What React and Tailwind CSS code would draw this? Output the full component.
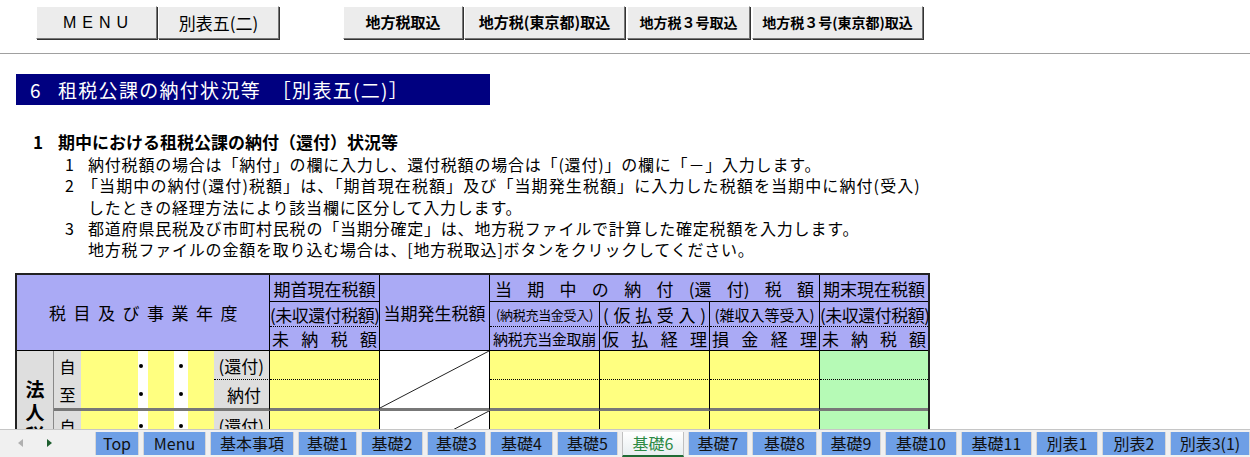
import React from 'react';

const JP = "font-['Noto_Sans_CJK_JP',sans-serif]";

const topButtons = [
  { label: '地方税取込', cls: 'w-[120px] ml-[64px] text-[15px] font-bold' },
  { label: '地方税(東京都)取込', cls: 'w-[161px] ml-[1px] text-[15px] font-bold' },
  { label: '地方税３号取込', cls: 'w-[123px] ml-[2px] text-[14px] font-bold' },
  { label: '地方税３号(東京都)取込', cls: 'w-[171px] ml-[2px] text-[14px] font-bold' },
];

const tabs = [
  ['Top', 'w-[44px]'],
  ['Menu', 'w-[63px]'],
  ['基本事項', 'w-[84px]'],
  ['基礎1', 'w-[59px]'],
  ['基礎2', 'w-[62px]'],
  ['基礎3', 'w-[59px]'],
  ['基礎4', 'w-[63px]'],
  ['基礎5', 'w-[61px]'],
  ['基礎6', 'w-[62px]'],
  ['基礎7', 'w-[60px]'],
  ['基礎8', 'w-[65px]'],
  ['基礎9', 'w-[60px]'],
  ['基礎10', 'w-[72px]'],
  ['基礎11', 'w-[71px]'],
  ['別表1', 'w-[62px]'],
  ['別表2', 'w-[64px]'],
  ['別表3(1)', 'w-[80px]'],
];

// characters spread evenly across the cell, like Excel's distributed alignment
function Spread({ chars, className = '' }) {
  return (
    <div className={`flex justify-between ${className}`}>
      {chars.map((c, i) => (
        <span key={i}>{c}</span>
      ))}
    </div>
  );
}

function Diagonal() {
  return (
    <svg className="absolute inset-0 w-full h-full" viewBox="0 0 100 100" preserveAspectRatio="none">
      <line x1="0" y1="100" x2="100" y2="0" stroke="#222" strokeWidth="1" vectorEffect="non-scaling-stroke" />
    </svg>
  );
}

function Dot() {
  return <span className="block w-[4px] h-[4px] rounded-full bg-black"></span>;
}

const lav = 'bg-[#aaaaf5]';
const gray = 'bg-[#dedede]';
const yel = 'bg-[#ffff80]';
const grn = 'bg-[#b6fab6]';
const dot = '[border-bottom-style:dotted]';
const thick = 'border-b-[3px] border-b-[#777]';

function DataRows({ first }) {
  return (
    <>
      <tr className="h-[29px]">
        {first && (
          <td rowSpan={4} className={`${gray} border-r border-r-[#888] align-middle`}>
            <div className="flex flex-col items-center text-[19px] font-bold leading-[23px]">
              <span>法</span>
              <span>人</span>
              <span>税</span>
            </div>
          </td>
        )}
        <td className={`${gray} text-center text-[16px]`}>自</td>
        <td className={yel}></td>
        <td className="bg-white pl-[1px]"><Dot /></td>
        <td className={yel}></td>
        <td className="bg-white pl-[5px]"><Dot /></td>
        <td className={yel}></td>
        <td className={`${gray} text-right pr-[5px] text-[17px] border-r border-black border-b border-b-black ${dot}`}>(還付)</td>
        <td className={`${yel} border-r border-black border-b ${dot}`}></td>
        <td rowSpan={2} className={`relative bg-white border-r border-black ${thick}`}>
          <Diagonal />
        </td>
        <td className={`${yel} border-r border-black border-b ${dot}`}></td>
        <td className={`${yel} border-r border-black border-b ${dot}`}></td>
        <td className={`${yel} border-r border-black border-b ${dot}`}></td>
        <td className={`${grn} border-b border-black ${dot}`}></td>
      </tr>
      <tr className="h-[31px]">
        <td className={`${gray} text-center text-[16px] ${thick}`}>至</td>
        <td className={`${yel} ${thick}`}></td>
        <td className={`bg-white pl-[1px] ${thick}`}><Dot /></td>
        <td className={`${yel} ${thick}`}></td>
        <td className={`bg-white pl-[5px] ${thick}`}><Dot /></td>
        <td className={`${yel} ${thick}`}></td>
        <td className={`${gray} text-right pr-[8px] text-[17px] border-r border-black ${thick}`}>納付</td>
        <td className={`${yel} border-r border-black ${thick}`}></td>
        <td className={`${yel} border-r border-black ${thick}`}></td>
        <td className={`${yel} border-r border-black ${thick}`}></td>
        <td className={`${yel} border-r border-black ${thick}`}></td>
        <td className={`${grn} ${thick}`}></td>
      </tr>
    </>
  );
}

export default function App() {
  return (
    <div className={`w-[1250px] h-[457px] flex flex-col bg-white text-black overflow-hidden ${JP}`}>
      <div className="flex-1 overflow-hidden">
        {/* button bar */}
        <div className="h-[54px] pt-[6px] border-b border-[#a0a0a0] flex items-start pl-[36px]">
          <button className="w-[121px] h-[33px] bg-[#ececec] border border-t-white border-l-white border-b-[#777] border-r-[#777] shadow-[1px_1px_0_#333] font-['Liberation_Sans',sans-serif] text-[16px] tracking-[6px] pl-[4px]">
            MENU
          </button>
          <button className="w-[121px] h-[33px] ml-[1px] bg-[#ececec] border border-t-white border-l-white border-b-[#777] border-r-[#777] shadow-[1px_1px_0_#333] text-[17px]">
            別表五(二)
          </button>
          {topButtons.map((b) => (
            <button
              key={b.label}
              className={`h-[33px] bg-[#ececec] border border-t-white border-l-white border-b-[#777] border-r-[#777] shadow-[1px_1px_0_#333] ${b.cls}`}
            >
              {b.label}
            </button>
          ))}
        </div>

        {/* section title */}
        <div className="mt-[20px] ml-[16px] w-[474px] h-[31px] bg-[#000080] text-white text-[19px] leading-[31px] pl-[14px] flex">
          <span className="w-[28px]">6</span>
          <span className="tracking-[1.3px]">租税公課の納付状況等　［別表五(二)］</span>
        </div>

        {/* notes */}
        <div className="mt-[26px] ml-[33px] flex text-[17px] font-bold leading-[22px]">
          <span className="w-[25px]">1</span>
          <span>期中における租税公課の納付（還付）状況等</span>
        </div>
        <div className="mt-[1px] ml-[65px] text-[16px] leading-[21.25px] tracking-[0.8px]">
          <div className="flex">
            <span className="w-[23px]">1</span>
            <span>納付税額の場合は「納付」の欄に入力し、還付税額の場合は「(還付)」の欄に「－」入力します。</span>
          </div>
          <div className="flex">
            <span className="w-[23px]">2</span>
            <span className="-ml-[6px] tracking-[1.1px]">「当期中の納付(還付)税額」は、「期首現在税額」及び「当期発生税額」に入力した税額を当期中に納付(受入)</span>
          </div>
          <div className="pl-[23px]">したときの経理方法により該当欄に区分して入力します。</div>
          <div className="flex">
            <span className="w-[23px]">3</span>
            <span>都道府県民税及び市町村民税の「当期分確定」は、地方税ファイルで計算した確定税額を入力します。</span>
          </div>
          <div className="pl-[23px]">地方税ファイルの金額を取り込む場合は、[地方税取込]ボタンをクリックしてください。</div>
        </div>

        {/* table */}
        <table className="mt-[13px] ml-[15px] w-[915px] table-fixed border-separate border-spacing-0 border-2 border-[#222] text-[17px] leading-none whitespace-nowrap">
          <colgroup>
            <col className="w-[37px]" />
            <col className="w-[27px]" />
            <col className="w-[57px]" />
            <col className="w-[10px]" />
            <col className="w-[26px]" />
            <col className="w-[14px]" />
            <col className="w-[26px]" />
            <col className="w-[56px]" />
            <col className="w-[110px]" />
            <col className="w-[110px]" />
            <col className="w-[110px]" />
            <col className="w-[110px]" />
            <col className="w-[110px]" />
            <col className="w-[108px]" />
          </colgroup>
          <tbody>
            <tr className="h-[27px]">
              <td colSpan={8} rowSpan={3} className={`${lav} border-r border-b border-black text-center`}>
                <span className="tracking-[7.5px] pl-[8px]">税目及び事業年度</span>
              </td>
              <td className={`${lav} border-r border-b border-black text-center`}>期首現在税額</td>
              <td rowSpan={3} className={`${lav} border-r border-b border-black text-center`}>当期発生税額</td>
              <td colSpan={3} className={`${lav} border-r border-b border-black px-[5px]`}>
                <Spread chars={['当', '期', '中', 'の', '納', '付', '(還', '付)', '税', '額']} />
              </td>
              <td className={`${lav} border-b border-black text-center`}>期末現在税額</td>
            </tr>
            <tr className="h-[25px]">
              <td className={`${lav} border-r border-b border-black ${dot} text-center tracking-[-0.5px]`}>(未収還付税額)</td>
              <td className={`${lav} border-r border-b border-black ${dot} text-center text-[13px] tracking-[-0.3px]`}>(納税充当金受入)</td>
              <td className={`${lav} border-r border-b border-black ${dot} px-[3px]`}>
                <Spread chars={['(', '仮', '払', '受', '入', ')']} />
              </td>
              <td className={`${lav} border-r border-b border-black ${dot} text-center text-[15px]`}>(雑収入等受入)</td>
              <td className={`${lav} border-b border-black ${dot} text-center tracking-[-0.5px]`}>(未収還付税額)</td>
            </tr>
            <tr className="h-[24px]">
              <td className={`${lav} border-r border-b border-black px-[2px]`}>
                <Spread chars={['未', '納', '税', '額']} />
              </td>
              <td className={`${lav} border-r border-b border-black text-center text-[15px] tracking-[-0.3px]`}>納税充当金取崩</td>
              <td className={`${lav} border-r border-b border-black px-[2px]`}>
                <Spread chars={['仮', '払', '経', '理']} />
              </td>
              <td className={`${lav} border-r border-b border-black px-[2px]`}>
                <Spread chars={['損', '金', '経', '理']} />
              </td>
              <td className={`${lav} border-b border-black px-[2px]`}>
                <Spread chars={['未', '納', '税', '額']} />
              </td>
            </tr>
            <DataRows first />
            <DataRows />
          </tbody>
        </table>
      </div>

      {/* sheet tabs */}
      <div className="h-[28px] shrink-0 bg-[#f0f0f0] border-t border-[#c6c6c6] flex items-start">
        <div className="w-[95px] h-[26px] flex items-center pl-[18px] gap-[24px]">
          <span className="w-0 h-0 border-y-[4px] border-y-transparent border-r-[5px] border-r-[#b0b0b0]"></span>
          <span className="w-0 h-0 border-y-[4px] border-y-transparent border-l-[5px] border-l-[#1d5e2e]"></span>
        </div>
        <div className="flex gap-[4px] pt-[2px]">
          {tabs.map(([label, w]) =>
            label === '基礎6' ? (
              <div
                key={label}
                className={`${w} h-[25px] bg-gradient-to-b from-white to-[#e8eef0] border-x border-[#c0c0c0] border-b-2 border-b-[#1f6b34] text-[#2d8a45] text-[16px] leading-[22px] text-center`}
              >
                {label}
              </div>
            ) : (
              <div
                key={label}
                className={`${w} h-[23px] bg-[#6e9fe6] border-x border-[#d6d6d6] text-[#111] text-[16px] leading-[22px] text-center`}
              >
                {label}
              </div>
            )
          )}
        </div>
      </div>
    </div>
  );
}
